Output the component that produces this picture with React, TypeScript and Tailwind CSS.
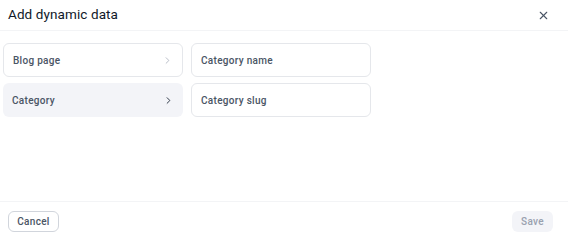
import { ChevronRight, X } from 'lucide-react'

export default function App() {
  return (
    <div className="w-[574px] h-[242px] bg-white" style={{ fontFamily: 'Roboto, "Liberation Sans", sans-serif' }}>
      <div className="w-[568px] h-[242px] flex flex-col">
        <div className="h-[31px] flex items-center justify-between pl-[8px] pr-[18px] border-b border-gray-100">
          <h2 className="text-[13.5px] font-normal text-gray-900 leading-none tracking-[0.1px]">Add dynamic data</h2>
          <X className="w-[13px] h-[13px] text-gray-600" strokeWidth={2} />
        </div>
        <div className="flex-1 flex gap-[8px] px-[3px] pt-[12px]">
          <div className="w-[180px] flex flex-col gap-[6px]">
            <div className="h-[34px] flex items-center justify-between px-[9px] rounded-md border border-gray-200">
              <span className="text-[10px] font-medium text-gray-600 tracking-[0.3px]">Blog page</span>
              <ChevronRight className="w-[11px] h-[11px] text-gray-400" strokeWidth={1.5} />
            </div>
            <div className="h-[34px] flex items-center justify-between px-[9px] rounded-md bg-[#f3f4f8]">
              <span className="text-[10px] font-medium text-gray-600 tracking-[0.3px]">Category</span>
              <ChevronRight className="w-[11px] h-[11px] text-gray-800" strokeWidth={2} />
            </div>
          </div>
          <div className="w-[180px] flex flex-col gap-[6px]">
            <div className="h-[34px] flex items-center px-[9px] rounded-md border border-gray-200">
              <span className="text-[10px] font-medium text-gray-600 tracking-[0.3px]">Category name</span>
            </div>
            <div className="h-[34px] flex items-center px-[9px] rounded-md border border-gray-200">
              <span className="text-[10px] font-medium text-gray-600 tracking-[0.3px]">Category slug</span>
            </div>
          </div>
        </div>
        <div className="h-[41px] border-t border-gray-100 flex items-start justify-between pt-[9px] pl-[8px] pr-[15px]">
          <button className="h-[21px] w-[51px] rounded-md border border-gray-300 text-[10px] font-medium text-gray-600 bg-white tracking-[0.3px]">Cancel</button>
          <button className="h-[21px] w-[41px] rounded-md bg-[#f3f4f8] text-[10px] font-medium text-gray-400 tracking-[0.3px]">Save</button>
        </div>
      </div>
    </div>
  )
}
